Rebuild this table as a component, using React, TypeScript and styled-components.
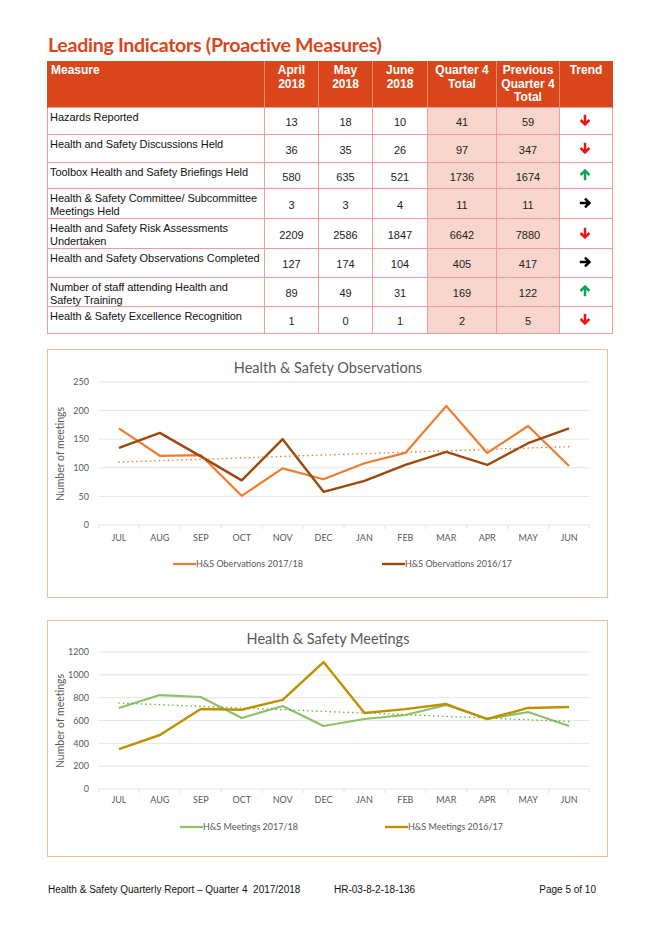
import React from "react";
import styled, { createGlobalStyle } from "styled-components";

const Global = createGlobalStyle`
  html, body { margin: 0; padding: 0; background: #ffffff; }
  body { width: 656px; height: 928px; overflow: hidden; }
`;

const Page = styled.div`
  width: 656px;
  height: 928px;
  box-sizing: border-box;
  padding: 33px 0 0 47px;
  display: flex;
  flex-direction: column;
  font-family: "Liberation Sans", Arial, sans-serif;
`;

const Title = styled.h1`
  margin: 0 0 5px 1px;
  font-family: Lato, "Open Sans", sans-serif;
  font-weight: 700;
  font-size: 19.6px;
  line-height: 23px;
  letter-spacing: -0.3px;
  color: #d9461b;
`;

const Table = styled.table`
  width: 565px;
  border-collapse: collapse;
  table-layout: fixed;
  font-family: "Liberation Sans", Arial, sans-serif;
`;

const HeadRow = styled.tr`
  height: 46px;
  background: #d9461b;
`;

const HeadCell = styled.th<{ $align?: string }>`
  padding: 2px 3px 0;
  vertical-align: top;
  text-align: ${(p) => p.$align || "center"};
  color: #ffffff;
  font-weight: 700;
  font-size: 12px;
  line-height: 13.5px;
  border-left: 1px solid #ee8a6c;
  border-right: 1px solid #ee8a6c;
  border-top: 1px solid #d9461b;
  &:first-child { border-left: 1px solid #d9461b; }
  &:last-child { border-right: 1px solid #d9461b; }
`;

const Row = styled.tr<{ $h: number }>`
  height: ${(p) => p.$h}px;
`;

const MeasureCell = styled.td`
  padding: 3px 0 0 2px;
  vertical-align: top;
  font-size: 11px;
  line-height: 12.5px;
  letter-spacing: -0.05px;
  white-space: pre-line;
  color: #111;
  border: 1px solid #f39a9a;
`;

const NumCell = styled.td<{ $shade?: boolean }>`
  padding: 2px 2px 0;
  vertical-align: middle;
  text-align: center;
  font-size: 11px;
  color: #222;
  background: ${(p) => (p.$shade ? "#f8d6cd" : "#ffffff")};
  border: 1px solid #f39a9a;
`;

const TrendCell = styled.td`
  padding: 0 2px 2px 0;
  vertical-align: middle;
  text-align: center;
  border: 1px solid #f39a9a;
  line-height: 0;
`;

const ChartCard = styled.div<{ $h: number; $mt: number }>`
  width: 561px;
  height: ${(p) => p.$h}px;
  margin-top: ${(p) => p.$mt}px;
  box-sizing: border-box;
  border: 1px solid #efbf9f;
  background: #ffffff;
`;

const Footer = styled.div`
  margin-top: 27px;
  width: 548px;
  display: grid;
  grid-template-columns: 286px 203px 1fr;
  font-family: "Liberation Sans", Arial, sans-serif;
  font-size: 10px;
  color: #111;
  padding-left: 1px;
`;

const FooterText = styled.span<{ $align?: string }>`
  text-align: ${(p) => p.$align || "left"};
  white-space: pre;
`;

type Dir = "down" | "up" | "right";

const TrendArrow = ({ dir }: { dir: Dir }) => {
  const color = dir === "down" ? "#ee1111" : dir === "up" ? "#10a050" : "#000000";
  const rot = dir === "down" ? 0 : dir === "up" ? 180 : -90;
  return (
    <svg width="12" height="12" viewBox="0 0 12 12">
      <g transform={`rotate(${rot} 6 6)`} fill="none" stroke={color} strokeWidth="2.5">
        <path d="M6 0.8 V10.5" />
        <path d="M1.6 6 L6 10.4 L10.4 6" strokeLinejoin="miter" />
      </g>
    </svg>
  );
};

type Row = {
  measure: string;
  vals: number[];
  trend: Dir;
  h: number;
};

const rows: Row[] = [
  { measure: "Hazards Reported", vals: [13, 18, 10, 41, 59], trend: "down", h: 27 },
  { measure: "Health and Safety Discussions Held", vals: [36, 35, 26, 97, 347], trend: "down", h: 28 },
  { measure: "Toolbox Health and Safety Briefings Held", vals: [580, 635, 521, 1736, 1674], trend: "up", h: 26 },
  { measure: "Health & Safety Committee/ Subcommittee\nMeetings Held", vals: [3, 3, 4, 11, 11], trend: "right", h: 30 },
  { measure: "Health and Safety Risk Assessments\nUndertaken", vals: [2209, 2586, 1847, 6642, 7880], trend: "down", h: 30 },
  { measure: "Health and Safety Observations Completed", vals: [127, 174, 104, 405, 417], trend: "right", h: 29 },
  { measure: "Number of staff attending Health and\nSafety Training", vals: [89, 49, 31, 169, 122], trend: "up", h: 29 },
  { measure: "Health & Safety Excellence Recognition", vals: [1, 0, 1, 2, 5], trend: "down", h: 27 },
];

const months = ["JUL", "AUG", "SEP", "OCT", "NOV", "DEC", "JAN", "FEB", "MAR", "APR", "MAY", "JUN"];

type Series = { name: string; color: string; width: number; data: number[] };

type ChartProps = {
  title: string;
  height: number;
  titleY: number;
  top: number;
  bottom: number;
  max: number;
  step: number;
  labelY: number;
  axisTitleY: number;
  legendY: number;
  legendX: [number, number];
  series: Series[];
  trend: { color: string; from: number; to: number };
};

const FONT = "Lato, 'Open Sans', sans-serif";

const LineChart = (p: ChartProps) => {
  const left = 50.5;
  const right = 541.5;
  const w = (right - left) / 12;
  const xAt = (i: number) => left + w * (i + 0.5);
  const yAt = (v: number) => p.bottom - ((p.bottom - p.top) * v) / p.max;
  const ticks: number[] = [];
  for (let v = 0; v <= p.max; v += p.step) ticks.push(v);
  return (
    <svg width="559" height={p.height - 2} viewBox={`0 0 559 ${p.height - 2}`}>
      <text x="280" y={p.titleY} textAnchor="middle" fontFamily={FONT} fontSize="14.5" fill="#595959">
        {p.title}
      </text>
      {ticks.map((v) => (
        <g key={v}>
          <line x1={left} x2={right} y1={yAt(v)} y2={yAt(v)} stroke="#dedede" strokeWidth="0.8" />
          <text x="41" y={yAt(v) + 3.2} textAnchor="end" fontFamily={FONT} fontSize="9" fill="#595959">
            {v}
          </text>
        </g>
      ))}
      {Array.from({ length: 13 }).map((_, i) => (
        <line key={i} x1={left + w * i} x2={left + w * i} y1={p.bottom} y2={p.bottom + 4} stroke="#d9d9d9" strokeWidth="0.8" />
      ))}
      {months.map((m, i) => (
        <text key={m} x={xAt(i)} y={p.labelY} textAnchor="middle" fontFamily={FONT} fontSize="9" fill="#595959">
          {m}
        </text>
      ))}
      <text
        transform={`translate(16 ${p.axisTitleY}) rotate(-90)`}
        textAnchor="middle"
        fontFamily={FONT}
        fontSize="10.5"
        fill="#595959"
      >
        Number of meetings
      </text>
      {p.series.map((s) => (
        <polyline
          key={s.name}
          points={s.data.map((v, i) => `${xAt(i)},${yAt(v)}`).join(" ")}
          fill="none"
          stroke={s.color}
          strokeWidth={s.width}
          strokeLinejoin="round"
        />
      ))}
      <line
        x1={xAt(0)}
        x2={xAt(11)}
        y1={yAt(p.trend.from)}
        y2={yAt(p.trend.to)}
        stroke={p.trend.color}
        strokeWidth="1.6"
        strokeDasharray="0.1 4.4"
        strokeLinecap="round"
      />
      {p.series.map((s, i) => (
        <g key={s.name}>
          <line x1={p.legendX[i]} x2={p.legendX[i] + 23} y1={p.legendY} y2={p.legendY} stroke={s.color} strokeWidth={s.width} />
          <text x={p.legendX[i] + 23} y={p.legendY + 3.2} fontFamily={FONT} fontSize="9" fill="#595959">
            {s.name}
          </text>
        </g>
      ))}
    </svg>
  );
};

export default function App() {
  return (
    <>
      <Global />
      <Page>
        <Title>Leading Indicators (Proactive Measures)</Title>
        <Table>
          <colgroup>
            <col style={{ width: 217 }} />
            <col style={{ width: 54 }} />
            <col style={{ width: 54 }} />
            <col style={{ width: 55 }} />
            <col style={{ width: 69 }} />
            <col style={{ width: 63 }} />
            <col style={{ width: 53 }} />
          </colgroup>
          <thead>
            <HeadRow>
              <HeadCell $align="left">Measure</HeadCell>
              <HeadCell>April 2018</HeadCell>
              <HeadCell>May 2018</HeadCell>
              <HeadCell>June 2018</HeadCell>
              <HeadCell>Quarter 4 Total</HeadCell>
              <HeadCell>Previous Quarter 4 Total</HeadCell>
              <HeadCell>Trend</HeadCell>
            </HeadRow>
          </thead>
          <tbody>
            {rows.map((r) => (
              <Row key={r.measure} $h={r.h}>
                <MeasureCell>{r.measure}</MeasureCell>
                {r.vals.map((v, i) => (
                  <NumCell key={i} $shade={i >= 3}>
                    {v}
                  </NumCell>
                ))}
                <TrendCell>
                  <TrendArrow dir={r.trend} />
                </TrendCell>
              </Row>
            ))}
          </tbody>
        </Table>

        <ChartCard $h={249} $mt={15}>
          <LineChart
            title="Health & Safety Observations"
            height={249}
            titleY={23}
            top={32}
            bottom={175}
            max={250}
            step={50}
            labelY={191}
            axisTitleY={104}
            legendY={214}
            legendX={[125, 334]}
            series={[
              { name: "H&S Obervations 2017/18", color: "#ed7d31", width: 2.2, data: [169, 121, 122, 51, 99, 80, 108, 126, 208, 126, 173, 103] },
              { name: "H&S Obervations 2016/17", color: "#9e480e", width: 2.4, data: [135, 161, 120, 78, 150, 58, 77, 105, 128, 105, 143, 169] },
            ]}
            trend={{ color: "#ed7d31", from: 110, to: 137 }}
          />
        </ChartCard>

        <ChartCard $h={237} $mt={22}>
          <LineChart
            title="Health & Safety Meetings"
            height={237}
            titleY={23}
            top={31}
            bottom={168}
            max={1200}
            step={200}
            labelY={182}
            axisTitleY={100}
            legendY={206}
            legendX={[132, 337]}
            series={[
              { name: "H&S Meetings 2017/18", color: "#8cc168", width: 2.2, data: [709, 823, 806, 622, 727, 552, 613, 648, 736, 613, 674, 552] },
              { name: "H&S Meetings 2016/17", color: "#bf9000", width: 2.4, data: [350, 473, 701, 694, 780, 1112, 666, 700, 744, 613, 710, 718] },
            ]}
            trend={{ color: "#70ad47", from: 753, to: 592 }}
          />
        </ChartCard>

        <Footer>
          <FooterText>{"Health & Safety Quarterly Report – Quarter 4  2017/2018"}</FooterText>
          <FooterText>HR-03-8-2-18-136</FooterText>
          <FooterText $align="right">Page 5 of 10</FooterText>
        </Footer>
      </Page>
    </>
  );
}
